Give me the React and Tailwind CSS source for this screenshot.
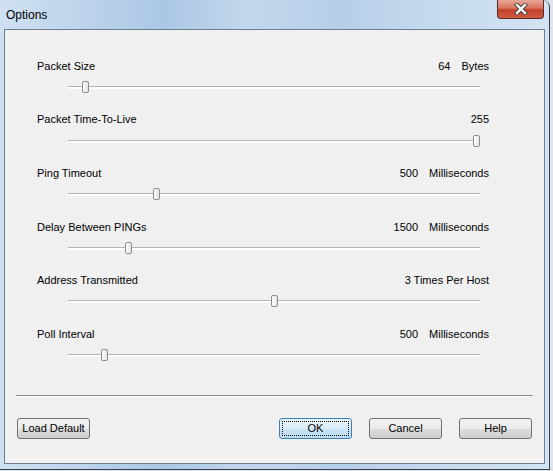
import React from 'react'

const SETTINGS = [
  { label: 'Packet Size', value: '64', unit: 'Bytes', pos: 0.034 },
  { label: 'Packet Time-To-Live', value: '255', unit: '', pos: 1 },
  { label: 'Ping Timeout', value: '500', unit: 'Milliseconds', pos: 0.209 },
  { label: 'Delay Between PINGs', value: '1500', unit: 'Milliseconds', pos: 0.14 },
  { label: 'Address Transmitted', value: '3 Times Per Host', unit: '', pos: 0.502 },
  { label: 'Poll Interval', value: '500', unit: 'Milliseconds', pos: 0.081 },
]

function Slider({ pos }) {
  // thumb travels the track minus its own width
  return (
    <div className="relative h-[12px] ml-[31px] mr-[9px]">
      <div className="absolute left-0 right-0 top-[5px] h-[3px] border-t border-[#b2b2b2] bg-white" />
      <div
        className="absolute top-0 w-[7px] h-[12px] rounded-[2px] border border-[#8d8d8d] bg-[linear-gradient(90deg,#ffffff,#e4e4e4)]"
        style={{ left: `calc(${pos} * (100% - 7px))` }}
      />
    </div>
  )
}

function Button({ children, focused }) {
  if (focused) {
    return (
      <button className="w-[73px] h-[21px] rounded-[3px] border border-[#3c7fb1] bg-[linear-gradient(180deg,#eaf6fd_0%,#dcecf8_50%,#c9e2f5_51%,#bedcf3_100%)] p-[2px] text-black">
        <span className="flex items-center justify-center w-full h-full border border-dotted border-black leading-none">
          {children}
        </span>
      </button>
    )
  }
  return (
    <button className="w-[73px] h-[21px] rounded-[3px] border border-[#707070] bg-[linear-gradient(180deg,#f3f3f3_0%,#ebebeb_50%,#dddddd_51%,#cfcfcf_100%)] text-black leading-none">
      {children}
    </button>
  )
}

function CloseButton() {
  return (
    <div className="ml-auto mr-[5px] w-[47px] h-[19px] rounded-b-[4px] border border-t-0 border-[#5b2a24] bg-[linear-gradient(180deg,#e9a99a_0%,#d9735e_45%,#c2402a_55%,#cf5b3f_100%)] flex items-center justify-center">
      <svg width="16" height="12" viewBox="0 0 16 12">
        <path d="M4 2 L12 10 M12 2 L4 10" stroke="#3b3b3b" strokeWidth="4.2" strokeLinecap="square" />
        <path d="M4 2 L12 10 M12 2 L4 10" stroke="#ffffff" strokeWidth="2.4" strokeLinecap="square" />
      </svg>
    </div>
  )
}

export default function App() {
  return (
    <div className="w-[553px] h-[471px] bg-[#dfe4ea] font-['Liberation_Sans',Arial,sans-serif] text-[11px] text-black overflow-hidden">
      <div className="w-[550px] h-[470px] flex flex-col border-r border-b border-[#34404d] rounded-tr-[7px] bg-[linear-gradient(90deg,#cfe0f2_0%,#b9d1ea_18%,#abc7e4_30%,#c2d7ed_45%,#b6cfe8_62%,#c6daef_80%,#d3e3f3_100%)]">
        {/* title bar */}
        <div className="h-[29px] flex items-start">
          <span className="pl-[6px] pt-[8px] text-[12px] leading-[14px]">Options</span>
          <CloseButton />
        </div>

        {/* client area */}
        <div className="ml-[4px] w-[541px] h-[435px] border border-[#6f7f90] bg-[#f0f0f0] flex flex-col">
          <div className="pt-[28px] pl-[32px] pr-[55px]">
            {SETTINGS.map((s) => (
              <div key={s.label} className="h-[53.6px]">
                <div className="flex justify-between h-[16px] items-center">
                  <span>{s.label}</span>
                  <span className="flex gap-[11px]">
                    <span>{s.value}</span>
                    {s.unit && <span>{s.unit}</span>}
                  </span>
                </div>
                <div className="mt-[7px]">
                  <Slider pos={s.pos} />
                </div>
              </div>
            ))}
          </div>

          <div className="mx-[11px] mt-[15px] h-[2px] border-t border-[#8a8a8a] border-b border-b-white" />

          <div className="flex mt-[21px] pl-[12px] pr-[12px]">
            <Button>Load Default</Button>
            <div className="ml-auto flex gap-[17px]">
              <Button focused>OK</Button>
              <Button>Cancel</Button>
              <Button>Help</Button>
            </div>
          </div>
        </div>
      </div>
    </div>
  )
}
